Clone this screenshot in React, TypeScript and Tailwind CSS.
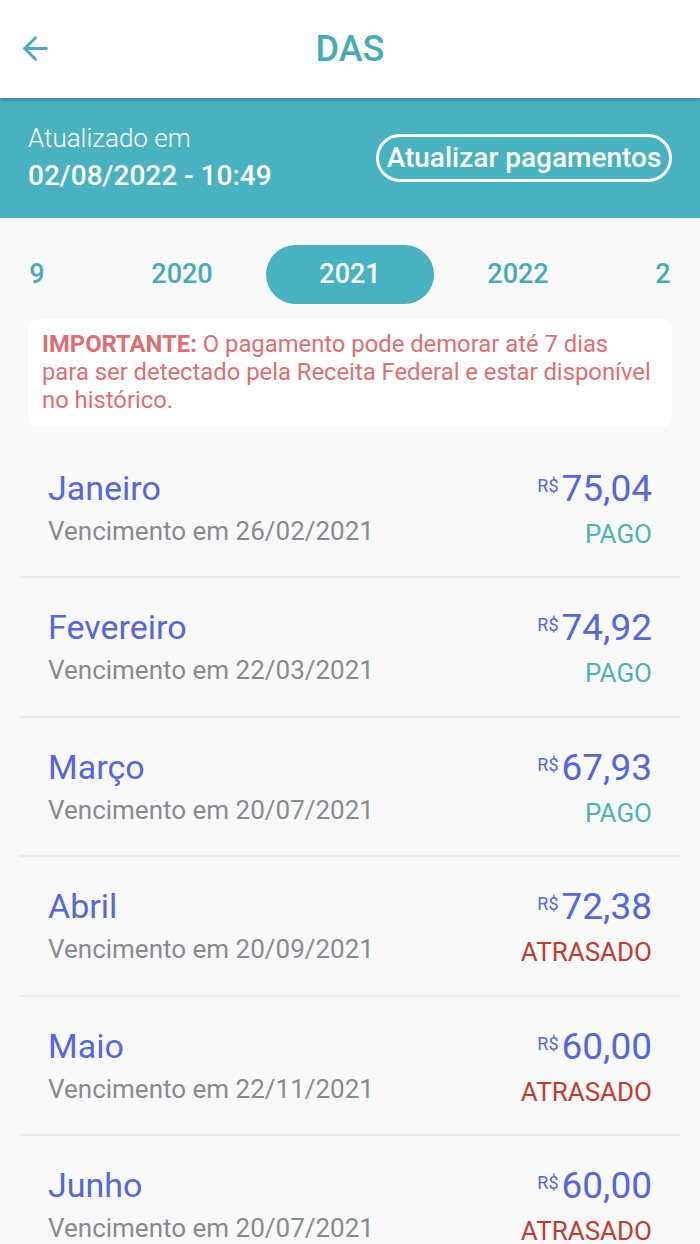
import { ArrowLeft } from "lucide-react";

type Parcela = {
  mes: string;
  vencimento: string;
  valor: string;
  status: "PAGO" | "ATRASADO";
};

const parcelas: Parcela[] = [
  { mes: "Janeiro", vencimento: "26/02/2021", valor: "75,04", status: "PAGO" },
  { mes: "Fevereiro", vencimento: "22/03/2021", valor: "74,92", status: "PAGO" },
  { mes: "Março", vencimento: "20/07/2021", valor: "67,93", status: "PAGO" },
  { mes: "Abril", vencimento: "20/09/2021", valor: "72,38", status: "ATRASADO" },
  { mes: "Maio", vencimento: "22/11/2021", valor: "60,00", status: "ATRASADO" },
  { mes: "Junho", vencimento: "20/07/2021", valor: "60,00", status: "ATRASADO" },
  { mes: "Julho", vencimento: "20/08/2021", valor: "60,00", status: "ATRASADO" },
];

const anos = ["2019", "2020", "2021", "2022", "2023"];

const Row = ({ p }: { p: Parcela }) => (
  <div className="mx-[20px] h-[139.5px] border-b-2 border-[#ececec] px-[28px] pt-[29px] flex justify-between">
    <div className="flex flex-col">
      <div className="text-[34px] leading-[40px] text-[#5567dd]">{p.mes}</div>
      <div className="mt-[8px] text-[26px] leading-[30px] text-[#878b91]">
        Vencimento em {p.vencimento}
      </div>
    </div>
    <div className="flex flex-col items-end">
      <div className="flex items-start text-[#5567dd]">
        <span className="mt-[9px] text-[18px] leading-[18px]">R$</span>
        <span className="ml-[3px] text-[37px] leading-[42px]">{p.valor}</span>
      </div>
      <div
        className={
          p.status === "PAGO"
            ? "mt-[9px] text-[26px] leading-[30px] text-[#4bb4b3]"
            : "mt-[9px] text-[26px] leading-[30px] text-[#c23b2e]"
        }
      >
        {p.status}
      </div>
    </div>
  </div>
);

export default function App() {
  return (
    <div className="h-[1244px] overflow-hidden bg-[#f9f9f9] font-[Roboto,sans-serif]">
      {/* Top bar */}
      <div className="relative z-10 h-[98px] bg-white shadow-[0_2px_4px_rgba(0,0,0,0.25)] flex items-center justify-center">
        <div className="absolute left-[17px] top-[30px] text-[#47acb9]">
          <ArrowLeft size={37} strokeWidth={1.9} />
        </div>
        <div className="text-[36px] leading-[40px] font-medium text-[#46abb8]">DAS</div>
      </div>

      {/* Update band */}
      <div className="h-[120px] bg-[#48b2c0] pl-[28px] pr-[28px] flex items-center justify-between">
        <div className="flex flex-col text-white">
          <div className="text-[26px] leading-[28px] font-light">Atualizado em</div>
          <div className="mt-[7px] text-[28px] leading-[34px] font-medium">02/08/2022 - 10:49</div>
        </div>
        <div className="h-[48px] w-[296px] rounded-full border-[3px] border-white flex items-center justify-center text-white text-[28px] font-medium whitespace-nowrap">
          Atualizar pagamentos
        </div>
      </div>

      {/* Years */}
      <div className="mx-[28px] overflow-hidden pt-[27px]">
        <div className="ml-[-98px] flex">
          {anos.map((a) => (
            <div
              key={a}
              className={
                a === "2021"
                  ? "w-[168px] shrink-0 h-[59px] rounded-full bg-[#48b2c0] text-white flex items-center justify-center text-[27px] font-medium"
                  : "w-[168px] shrink-0 h-[59px] text-[#46abb8] flex items-center justify-center text-[27px] font-medium"
              }
            >
              {a}
            </div>
          ))}
        </div>
      </div>

      {/* Notice */}
      <div className="mx-[28px] mt-[15px] rounded-[10px] bg-white pl-[14px] pt-[11px] pb-[13px] text-[23.8px] leading-[28px] text-[#df6e70] whitespace-nowrap">
        <div>
          <span className="font-bold">IMPORTANTE:</span> O pagamento pode demorar até 7 dias
        </div>
        <div>para ser detectado pela Receita Federal e estar disponível</div>
        <div>no histórico.</div>
      </div>

      {/* List */}
      <div className="mt-[11.5px]">
        {parcelas.map((p) => (
          <Row key={p.mes} p={p} />
        ))}
      </div>
    </div>
  );
}
